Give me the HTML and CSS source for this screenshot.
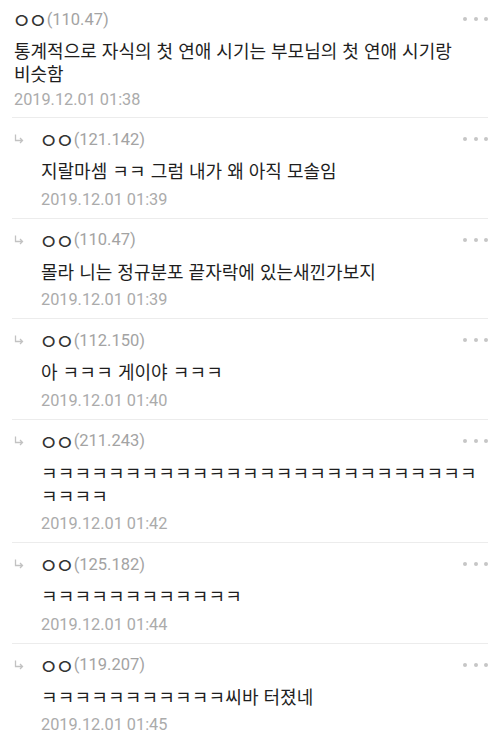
FILE: index.html
```html
<!DOCTYPE html>
<html lang="ko">
<head>
<meta charset="utf-8">
<link rel="stylesheet" href="styles.css">
</head>
<body>
<div class="list">
  <div class="comment first">
    <div class="head">
      <span class="nick">ㅇㅇ</span><span class="ip">(110.47)</span>
      <span class="more"><i></i><i></i><i></i></span>
    </div>
    <div class="body">통계적으로 자식의 첫 연애 시기는 부모님의 첫 연애 시기랑 비슷함</div>
    <div class="date">2019.12.01 01:38</div>
  </div>

  <div class="comment reply">
    <svg class="arrow" width="10" height="10" viewBox="0 0 10 10"><path d="M1.5 0.5V6.5H8.5M6 4L8.5 6.5L6 9" fill="none" stroke="#c2c2c2" stroke-width="1.3"/></svg>
    <div class="content">
      <div class="head"><span class="nick">ㅇㅇ</span><span class="ip">(121.142)</span><span class="more"><i></i><i></i><i></i></span></div>
      <div class="body">지랄마셈 <span class="kk">ㅋㅋ</span> 그럼 내가 왜 아직 모솔임</div>
      <div class="date">2019.12.01 01:39</div>
    </div>
  </div>

  <div class="comment reply">
    <svg class="arrow" width="10" height="10" viewBox="0 0 10 10"><path d="M1.5 0.5V6.5H8.5M6 4L8.5 6.5L6 9" fill="none" stroke="#c2c2c2" stroke-width="1.3"/></svg>
    <div class="content">
      <div class="head"><span class="nick">ㅇㅇ</span><span class="ip">(110.47)</span><span class="more"><i></i><i></i><i></i></span></div>
      <div class="body">몰라 니는 정규분포 끝자락에 있는새낀가보지</div>
      <div class="date">2019.12.01 01:39</div>
    </div>
  </div>

  <div class="comment reply">
    <svg class="arrow" width="10" height="10" viewBox="0 0 10 10"><path d="M1.5 0.5V6.5H8.5M6 4L8.5 6.5L6 9" fill="none" stroke="#c2c2c2" stroke-width="1.3"/></svg>
    <div class="content">
      <div class="head"><span class="nick">ㅇㅇ</span><span class="ip">(112.150)</span><span class="more"><i></i><i></i><i></i></span></div>
      <div class="body">아 <span class="kk">ㅋㅋㅋ</span> 게이야 <span class="kk">ㅋㅋㅋ</span></div>
      <div class="date">2019.12.01 01:40</div>
    </div>
  </div>

  <div class="comment reply">
    <svg class="arrow" width="10" height="10" viewBox="0 0 10 10"><path d="M1.5 0.5V6.5H8.5M6 4L8.5 6.5L6 9" fill="none" stroke="#c2c2c2" stroke-width="1.3"/></svg>
    <div class="content">
      <div class="head"><span class="nick">ㅇㅇ</span><span class="ip">(211.243)</span><span class="more"><i></i><i></i><i></i></span></div>
      <div class="body"><span class="kk">ㅋㅋㅋㅋㅋㅋㅋㅋㅋㅋㅋㅋㅋㅋㅋㅋㅋㅋㅋㅋㅋㅋㅋㅋㅋㅋㅋㅋㅋㅋ</span></div>
      <div class="date">2019.12.01 01:42</div>
    </div>
  </div>

  <div class="comment reply">
    <svg class="arrow" width="10" height="10" viewBox="0 0 10 10"><path d="M1.5 0.5V6.5H8.5M6 4L8.5 6.5L6 9" fill="none" stroke="#c2c2c2" stroke-width="1.3"/></svg>
    <div class="content">
      <div class="head"><span class="nick">ㅇㅇ</span><span class="ip">(125.182)</span><span class="more"><i></i><i></i><i></i></span></div>
      <div class="body"><span class="kk">ㅋㅋㅋㅋㅋㅋㅋㅋㅋㅋㅋㅋ</span></div>
      <div class="date">2019.12.01 01:44</div>
    </div>
  </div>

  <div class="comment reply last">
    <svg class="arrow" width="10" height="10" viewBox="0 0 10 10"><path d="M1.5 0.5V6.5H8.5M6 4L8.5 6.5L6 9" fill="none" stroke="#c2c2c2" stroke-width="1.3"/></svg>
    <div class="content">
      <div class="head"><span class="nick">ㅇㅇ</span><span class="ip">(119.207)</span><span class="more"><i></i><i></i><i></i></span></div>
      <div class="body"><span class="kk">ㅋㅋㅋㅋㅋㅋㅋㅋㅋㅋㅋ</span>씨바 터졌네</div>
      <div class="date">2019.12.01 01:45</div>
    </div>
  </div>
</div>
</body>
</html>
```

FILE: styles.css
```css
html, body {
  margin: 0;
  padding: 0;
  background: #fff;
}
body {
  width: 500px;
  height: 738px;
  overflow: hidden;
  font-family: Roboto, "Noto Sans CJK KR", sans-serif;
}
.list {
  display: flex;
  flex-direction: column;
}
.comment {
  margin: 0 12px;
  border-bottom: 1px solid #ececec;
  padding: 10px 0 8px 2px;
}
.comment.first {
  padding-top: 8px;
  padding-bottom: 7px;
}
.comment.last {
  border-bottom: none;
}
.reply {
  display: flex;
  align-items: flex-start;
}
.arrow {
  flex: none;
  margin-top: 6px;
  margin-right: 17px;
}
.content {
  flex: 1;
  min-width: 0;
}
.head {
  display: flex;
  align-items: center;
  height: 22px;
}
.nick {
  font-family: "Noto Sans CJK KR", sans-serif;
  font-size: 21px;
  line-height: 22px;
  letter-spacing: -3px;
  margin-left: -2px;
  margin-right: 2px;
  color: #333;
  font-weight: 400;
}
.ip {
  font-size: 16.5px;
  color: #a3a3a3;
}
.more {
  margin-left: auto;
  display: flex;
  gap: 6.5px;
}
.more i {
  width: 4px;
  height: 4px;
  border-radius: 50%;
  background: #c6c6c6;
}
.body {
  margin-top: 9px;
  font-family: "Noto Sans CJK KR", sans-serif;
  font-size: 18px;
  line-height: 23px;
  color: #1e1e1e;
  word-break: keep-all;
  overflow-wrap: anywhere;
  padding-right: 2px;
}
.kk {
  letter-spacing: 0.2px;
}
.date {
  margin-top: 7.5px;
  font-size: 16.3px;
  line-height: 20px;
  color: #ababab;
}
.first .date {
  margin-top: 5px;
}
```
